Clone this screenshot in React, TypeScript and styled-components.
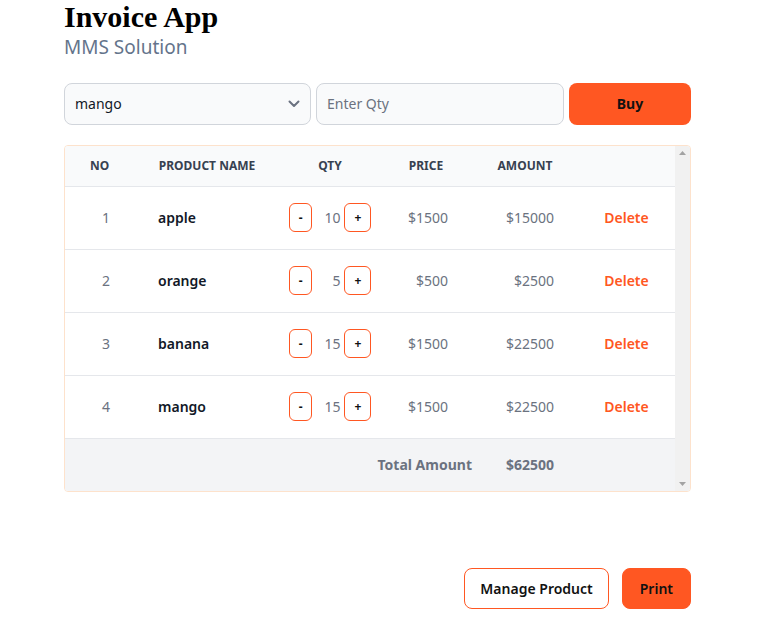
import React from "react";
import styled, { createGlobalStyle } from "styled-components";

const orange = "#ff5722";

const GlobalStyle = createGlobalStyle`
  body {
    margin: 0;
    background: #ffffff;
    font-family: "Noto Sans", "Open Sans", sans-serif;
    color: #111827;
  }
`;

interface Item {
  name: string;
  qty: number;
  price: number;
}

const items: Item[] = [
  { name: "apple", qty: 10, price: 1500 },
  { name: "orange", qty: 5, price: 500 },
  { name: "banana", qty: 15, price: 1500 },
  { name: "mango", qty: 15, price: 1500 },
];

const App: React.FC = () => {
  const total = items.reduce((sum, i) => sum + i.qty * i.price, 0);

  return (
    <>
      <GlobalStyle />
      <Page>
        <Title>Invoice App</Title>
        <Subtitle>MMS Solution</Subtitle>

        <Controls>
          <SelectWrap>
            <Select defaultValue="mango">
              <option value="apple">apple</option>
              <option value="orange">orange</option>
              <option value="banana">banana</option>
              <option value="mango">mango</option>
            </Select>
            <Chevron width="12" height="8" viewBox="0 0 12 8">
              <path d="M1.5 1.5 L6 6 L10.5 1.5" fill="none" stroke="#6b7280" strokeWidth="2" strokeLinecap="round" strokeLinejoin="round" />
            </Chevron>
          </SelectWrap>
          <QtyInput placeholder="Enter Qty" />
          <BuyButton>Buy</BuyButton>
        </Controls>

        <TableBox>
          <Table>
            <colgroup>
              <col style={{ width: 69 }} />
              <col style={{ width: 146 }} />
              <col style={{ width: 100 }} />
              <col style={{ width: 92 }} />
              <col style={{ width: 106 }} />
              <col />
            </colgroup>
            <thead>
              <tr>
                <Th>No</Th>
                <Th>Product Name</Th>
                <Th>Qty</Th>
                <Th>Price</Th>
                <Th>Amount</Th>
                <Th />
              </tr>
            </thead>
            <tbody>
              {items.map((item, idx) => (
                <tr key={item.name}>
                  <Td align="right" muted>{idx + 1}</Td>
                  <Td align="left" strong>{item.name}</Td>
                  <Td align="center" tight>
                    <QtyControl>
                      <StepButton>-</StepButton>
                      <QtyValue>{item.qty}</QtyValue>
                      <StepButton>+</StepButton>
                    </QtyControl>
                  </Td>
                  <Td align="right" muted>${item.price}</Td>
                  <Td align="right" muted>${item.qty * item.price}</Td>
                  <Td align="center" tight>
                    <DeleteLink>Delete</DeleteLink>
                  </Td>
                </tr>
              ))}
            </tbody>
            <tfoot>
              <tr>
                <FootCell colSpan={4} align="right" flush>Total Amount</FootCell>
                <FootCell align="right">${total}</FootCell>
                <FootCell />
              </tr>
            </tfoot>
          </Table>
          <ScrollTrack>
            <svg width="7" height="4" viewBox="0 0 7 4">
              <path d="M0 4 L3.5 0 L7 4 Z" fill="#a3a3a3" />
            </svg>
            <svg width="7" height="4" viewBox="0 0 7 4">
              <path d="M0 0 L3.5 4 L7 0 Z" fill="#a3a3a3" />
            </svg>
          </ScrollTrack>
        </TableBox>

        <Actions>
          <OutlineButton>Manage Product</OutlineButton>
          <PrintButton>Print</PrintButton>
        </Actions>
      </Page>
    </>
  );
};

export default App;

// styled

const Page = styled.div`
  width: 627px;
  padding-left: 64px;
  display: flex;
  flex-direction: column;
`;

const Title = styled.h1`
  margin: 0;
  font-family: "Liberation Serif", "Times New Roman", serif;
  font-size: 30px;
  line-height: 34px;
  font-weight: 700;
  color: #000000;
`;

const Subtitle = styled.p`
  margin: 1px 0 0;
  font-size: 19px;
  line-height: 24px;
  color: #64748b;
`;

const Controls = styled.div`
  margin-top: 24px;
  display: flex;
  gap: 5px;
  height: 42px;
`;

const SelectWrap = styled.div`
  position: relative;
  width: 247px;
  flex: none;
`;

const Select = styled.select`
  appearance: none;
  width: 100%;
  height: 100%;
  box-sizing: border-box;
  padding: 0 32px 2px 10px;
  border: 1px solid #d1d5db;
  border-radius: 8px;
  background: #f9fafb;
  font-family: inherit;
  font-size: 14px;
  color: #111827;
  outline: none;
`;

const Chevron = styled.svg`
  position: absolute;
  right: 11px;
  top: 17px;
  pointer-events: none;
`;

const QtyInput = styled.input`
  width: 248px;
  flex: none;
  box-sizing: border-box;
  padding: 0 10px 2px;
  border: 1px solid #d1d5db;
  border-radius: 8px;
  background: #f9fafb;
  font-family: inherit;
  font-size: 14px;
  color: #111827;
  outline: none;

  &::placeholder {
    color: #6b7280;
  }
`;

const BuyButton = styled.button`
  flex: 1;
  padding-bottom: 2px;
  border: none;
  border-radius: 8px;
  background: ${orange};
  color: #111111;
  font-family: inherit;
  font-size: 14px;
  font-weight: 700;
  cursor: pointer;
`;

const TableBox = styled.div`
  margin-top: 20px;
  border: 1px solid #fde2cc;
  border-radius: 4px;
  display: flex;
  overflow: hidden;
`;

const ScrollTrack = styled.div`
  width: 15px;
  flex: none;
  background: #f1f1f1;
  display: flex;
  flex-direction: column;
  justify-content: space-between;
  align-items: center;
  padding: 5px 0;
`;

const Table = styled.table`
  flex: 1;
  min-width: 0;
  table-layout: fixed;
  border-collapse: collapse;
  font-size: 14px;
`;

const Th = styled.th`
  height: 38px;
  padding: 0 0 2px;
  background: #f9fafb;
  border-bottom: 1px solid #e5e7eb;
  font-size: 12px;
  font-weight: 700;
  text-transform: uppercase;
  text-align: center;
  color: #374151;
`;

interface cellProps {
  align?: "left" | "right" | "center";
  muted?: boolean;
  strong?: boolean;
  flush?: boolean;
  tight?: boolean;
}

const Td = styled.td.withConfig({
  shouldForwardProp: (p) => !["align", "muted", "strong", "tight"].includes(p),
})<cellProps>`
  height: 60px;
  padding: 0 ${(p) => (p.tight ? "0" : "24px")} 2px;
  border-bottom: 1px solid #e5e7eb;
  text-align: ${(p) => p.align || "left"};
  color: ${(p) => (p.muted ? "#6b7280" : "#111827")};
  font-weight: ${(p) => (p.strong ? 600 : 400)};
`;

const QtyControl = styled.div`
  display: inline-flex;
  align-items: center;
  vertical-align: middle;
`;

const StepButton = styled.button`
  height: 29px;
  padding: 0 9px;
  border: 1px solid ${orange};
  border-radius: 6px;
  background: #ffffff;
  color: #111111;
  font-family: inherit;
  font-size: 12px;
  font-weight: 700;
  cursor: pointer;
`;

const QtyValue = styled.span`
  width: 32px;
  padding-right: 4px;
  box-sizing: border-box;
  text-align: right;
  color: #6b7280;
`;

const DeleteLink = styled.span`
  color: ${orange};
  font-weight: 600;
  cursor: pointer;
`;

const FootCell = styled.td.withConfig({
  shouldForwardProp: (p) => !["align", "flush"].includes(p),
})<cellProps>`
  height: 50px;
  padding: 0 ${(p) => (p.flush ? "0" : "24px")} 2px 0;
  background: #f3f4f6;
  text-align: ${(p) => p.align || "left"};
  font-weight: 700;
  color: #6b7280;
`;

const Actions = styled.div`
  margin-top: 76px;
  display: flex;
  justify-content: flex-end;
  gap: 13px;
`;

const OutlineButton = styled.button`
  height: 41px;
  padding: 0 15px;
  border: 1px solid ${orange};
  border-radius: 8px;
  background: #ffffff;
  color: #111111;
  font-family: inherit;
  font-size: 14px;
  font-weight: 600;
  cursor: pointer;
`;

const PrintButton = styled(OutlineButton)`
  padding: 0 17px;
  background: ${orange};
`;
